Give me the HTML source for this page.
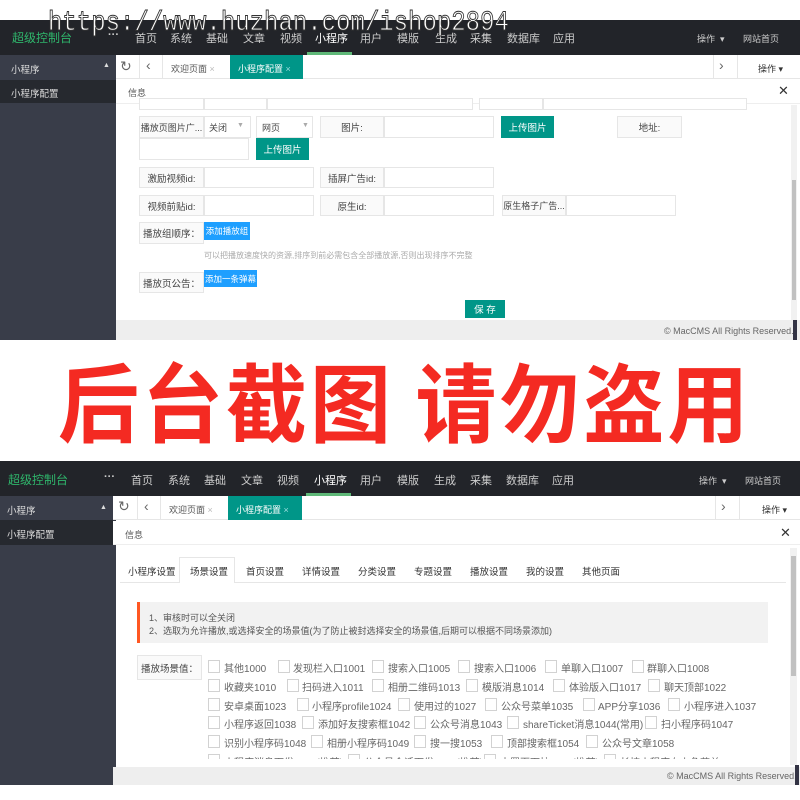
<!DOCTYPE html>
<html><head><meta charset="utf-8"><style>
*{margin:0;padding:0;box-sizing:border-box}
body{width:800px;height:800px;background:#fff;position:relative;overflow:hidden;font-family:"Liberation Sans","Noto Sans CJK SC",sans-serif;font-size:10px;color:#333}
.a{position:absolute;white-space:nowrap}
.hd{background:#222429;left:0;width:800px}
.nav{color:#ccc;font-size:11px}
.sb{background:#393d49;left:0;width:116px}
.lb{position:absolute;border:1px solid #e6e6e6;background:#fafafa;color:#444;font-size:9.5px;display:flex;align-items:center;justify-content:center}
.in{position:absolute;border:1px solid #e6e6e6;background:#fff}
.tb{position:absolute;background:#009688;color:#fff;font-size:9.5px;display:flex;align-items:center;justify-content:center}
.bb{position:absolute;background:#1e9fff;color:#fff;font-size:8.5px;display:flex;align-items:center;justify-content:center}
.cb{position:absolute;width:12px;height:13px;border:1px solid #d2d2d2;background:#fff}
.ct{position:absolute;font-size:10px;color:#666;white-space:nowrap}
.tab{position:absolute;font-size:9.5px;color:#333}
</style></head><body>

<div class="a hd" style="top:20px;height:35px"></div>
<div class="a" style="top:29px;left:12px;color:#2fb56b;font-size:12px">超级控制台</div>
<div class="a nav" style="top:29px;left:108px;font-weight:bold">···</div>
<div class="a nav" style="top:30px;left:135px">首页</div>
<div class="a nav" style="top:30px;left:170px">系统</div>
<div class="a nav" style="top:30px;left:206px">基础</div>
<div class="a nav" style="top:30px;left:243px">文章</div>
<div class="a nav" style="top:30px;left:280px">视频</div>
<div class="a nav" style="top:30px;left:315px;color:#fff">小程序</div>
<div class="a" style="top:52px;left:307px;width:45px;height:3px;background:#5fb878"></div>
<div class="a nav" style="top:30px;left:360px">用户</div>
<div class="a nav" style="top:30px;left:397px">模版</div>
<div class="a nav" style="top:30px;left:435px">生成</div>
<div class="a nav" style="top:30px;left:470px">采集</div>
<div class="a nav" style="top:30px;left:507px">数据库</div>
<div class="a nav" style="top:30px;left:553px">应用</div>
<div class="a nav" style="top:32px;left:697px;font-size:9px">操作 &nbsp;▾</div>
<div class="a nav" style="top:32px;left:743px;font-size:9px">网站首页</div>

<div class="a sb" style="top:55px;height:285px"></div>
<div class="a" style="top:62px;left:11px;color:#ddd;font-size:9.5px">小程序</div>
<div class="a" style="top:62px;left:103px;color:#ddd;font-size:7px">▲</div>
<div class="a" style="top:80px;left:0;width:116px;height:23px;background:#26292f"></div>
<div class="a" style="top:86px;left:11px;color:#ddd;font-size:9.5px">小程序配置</div>

<div class="a" style="top:55px;left:116px;width:684px;height:24px;background:#fff;border-bottom:1px solid #e6e6e6"></div>
<div class="a" style="top:58px;left:120px;font-size:14px;color:#666">↻</div>
<div class="a" style="top:55px;left:139px;width:1px;height:24px;background:#e6e6e6"></div>
<div class="a" style="top:57px;left:146px;font-size:14px;color:#666">‹</div>
<div class="a" style="top:55px;left:162px;width:1px;height:24px;background:#e6e6e6"></div>
<div class="a" style="top:62px;left:171px;font-size:9px;color:#555">欢迎页面 <span style="color:#bbb">×</span></div>
<div class="a" style="top:55px;left:230px;width:73px;height:24px;background:#009688"></div>
<div class="a" style="top:62px;left:238px;font-size:9px;color:#fff">小程序配置 <span style="color:#9dd">×</span></div>
<div class="a" style="top:55px;left:713px;width:1px;height:24px;background:#e6e6e6"></div>
<div class="a" style="top:57px;left:719px;font-size:14px;color:#666">›</div>
<div class="a" style="top:55px;left:737px;width:1px;height:24px;background:#e6e6e6"></div>
<div class="a" style="top:62px;left:758px;font-size:9px;color:#333">操作 ▾</div>

<div class="a" style="top:80px;left:116px;width:684px;height:24px;background:#fff;border-bottom:1px solid #eee"></div>
<div class="a" style="top:86px;left:128px;font-size:9px;color:#555">信息</div>
<div class="a" style="top:83px;left:778px;font-size:13px;color:#333">✕</div>

<div class="in" style="top:98px;left:139px;width:65px;height:12px"></div>
<div class="in" style="top:98px;left:204px;width:63px;height:12px"></div>
<div class="in" style="top:98px;left:267px;width:206px;height:12px"></div>
<div class="in" style="top:98px;left:479px;width:64px;height:12px"></div>
<div class="in" style="top:98px;left:543px;width:204px;height:12px"></div>

<div class="lb" style="top:116px;left:139px;width:65px;height:22px;font-size:9px">播放页图片广...</div>
<div class="in" style="top:116px;left:204px;width:47px;height:22px"></div>
<div class="a" style="top:121px;left:209px;font-size:9px;color:#444">关闭</div>
<div class="a" style="top:122px;left:237px;font-size:7px;color:#aaa">▼</div>
<div class="in" style="top:116px;left:256px;width:57px;height:22px"></div>
<div class="a" style="top:121px;left:262px;font-size:9px;color:#444">网页</div>
<div class="a" style="top:122px;left:302px;font-size:7px;color:#aaa">▼</div>
<div class="lb" style="top:116px;left:320px;width:64px;height:22px">图片:</div>
<div class="in" style="top:116px;left:384px;width:110px;height:22px"></div>
<div class="tb" style="top:116px;left:501px;width:53px;height:22px">上传图片</div>
<div class="lb" style="top:116px;left:617px;width:65px;height:22px">地址:</div>
<div class="in" style="top:138px;left:139px;width:110px;height:22px"></div>
<div class="tb" style="top:138px;left:256px;width:53px;height:22px">上传图片</div>

<div class="lb" style="top:167px;left:139px;width:65px;height:21px">激励视频id:</div>
<div class="in" style="top:167px;left:204px;width:110px;height:21px"></div>
<div class="lb" style="top:167px;left:320px;width:64px;height:21px">插屏广告id:</div>
<div class="in" style="top:167px;left:384px;width:110px;height:21px"></div>

<div class="lb" style="top:195px;left:139px;width:65px;height:21px">视频前贴id:</div>
<div class="in" style="top:195px;left:204px;width:110px;height:21px"></div>
<div class="lb" style="top:195px;left:320px;width:64px;height:21px">原生id:</div>
<div class="in" style="top:195px;left:384px;width:110px;height:21px"></div>
<div class="lb" style="top:195px;left:502px;width:64px;height:21px;font-size:9px">原生格子广告...</div>
<div class="in" style="top:195px;left:566px;width:110px;height:21px"></div>

<div class="lb" style="top:222px;left:139px;width:65px;height:22px">播放组顺序：</div>
<div class="bb" style="top:222px;left:204px;width:46px;height:18px">添加播放组</div>
<div class="a" style="top:250px;left:204px;font-size:8px;color:#aaa">可以把播放速度快的资源,排序到前必需包含全部播放源,否则出现排序不完整</div>
<div class="lb" style="top:272px;left:139px;width:65px;height:21px">播放页公告：</div>
<div class="bb" style="top:270px;left:204px;width:53px;height:17px">添加一条弹幕</div>
<div class="tb" style="top:300px;left:465px;width:40px;height:18px">保 存</div>

<div class="a" style="top:105px;left:791px;width:6px;height:215px;background:#f1f1f1"></div>
<div class="a" style="top:180px;left:792px;width:4px;height:120px;background:#c1c1c1"></div>
<div class="a" style="top:320px;left:116px;width:684px;height:20px;background:#eee"></div>
<div class="a" style="top:326px;left:664px;font-size:9px;color:#666">© MacCMS All Rights Reserved.</div>
<div class="a" style="top:320px;left:793px;width:4px;height:20px;background:#334"></div>

<div class="a" style="top:8px;left:48px;font-family:'Liberation Mono',monospace;font-size:24px;color:#fff;-webkit-text-stroke:0.8px #333;transform:scaleY(1.15);transform-origin:0 0">https://www.huzhan.com/ishop2894</div>

<div class="a" style="top:352px;left:58px;font-size:81px;line-height:90px;font-weight:bold;color:#f42a22;font-family:'Noto Sans CJK SC',sans-serif;letter-spacing:3px;transform:scaleY(1.06);transform-origin:0 0">后台截图 请勿盗用</div>

<div class="a hd" style="top:461px;height:35px"></div>
<div class="a" style="top:471px;left:8px;color:#2fb56b;font-size:12px">超级控制台</div>
<div class="a nav" style="top:471px;left:104px;font-weight:bold">···</div>
<div class="a nav" style="top:472px;left:131px">首页</div>
<div class="a nav" style="top:472px;left:168px">系统</div>
<div class="a nav" style="top:472px;left:204px">基础</div>
<div class="a nav" style="top:472px;left:241px">文章</div>
<div class="a nav" style="top:472px;left:277px">视频</div>
<div class="a nav" style="top:472px;left:314px;color:#fff">小程序</div>
<div class="a" style="top:493px;left:306px;width:45px;height:3px;background:#5fb878"></div>
<div class="a nav" style="top:472px;left:360px">用户</div>
<div class="a nav" style="top:472px;left:397px">模版</div>
<div class="a nav" style="top:472px;left:434px">生成</div>
<div class="a nav" style="top:472px;left:470px">采集</div>
<div class="a nav" style="top:472px;left:506px">数据库</div>
<div class="a nav" style="top:472px;left:552px">应用</div>
<div class="a nav" style="top:474px;left:699px;font-size:9px">操作 &nbsp;▾</div>
<div class="a nav" style="top:474px;left:745px;font-size:9px">网站首页</div>

<div class="a sb" style="top:496px;height:289px"></div>
<div class="a" style="top:503px;left:7px;color:#ddd;font-size:9.5px">小程序</div>
<div class="a" style="top:504px;left:100px;color:#ddd;font-size:7px">▲</div>
<div class="a" style="top:520px;left:0;width:113px;height:25px;background:#26292f"></div>
<div class="a" style="top:527px;left:7px;color:#ddd;font-size:9.5px">小程序配置</div>

<div class="a" style="top:496px;left:113px;width:687px;height:24px;background:#fff;border-bottom:1px solid #e6e6e6"></div>
<div class="a" style="top:498px;left:118px;font-size:14px;color:#666">↻</div>
<div class="a" style="top:496px;left:137px;width:1px;height:24px;background:#e6e6e6"></div>
<div class="a" style="top:498px;left:144px;font-size:14px;color:#666">‹</div>
<div class="a" style="top:496px;left:160px;width:1px;height:24px;background:#e6e6e6"></div>
<div class="a" style="top:503px;left:169px;font-size:9px;color:#555">欢迎页面 <span style="color:#bbb">×</span></div>
<div class="a" style="top:496px;left:228px;width:74px;height:24px;background:#009688"></div>
<div class="a" style="top:503px;left:236px;font-size:9px;color:#fff">小程序配置 <span style="color:#9dd">×</span></div>
<div class="a" style="top:496px;left:715px;width:1px;height:24px;background:#e6e6e6"></div>
<div class="a" style="top:498px;left:721px;font-size:14px;color:#666">›</div>
<div class="a" style="top:496px;left:739px;width:1px;height:24px;background:#e6e6e6"></div>
<div class="a" style="top:503px;left:762px;font-size:9px;color:#333">操作 ▾</div>

<div class="a" style="top:521px;left:113px;width:687px;height:24px;background:#fff;border-bottom:1px solid #eee"></div>
<div class="a" style="top:528px;left:125px;font-size:9px;color:#555">信息</div>
<div class="a" style="top:525px;left:780px;font-size:13px;color:#333">✕</div>

<div class="a" style="top:582px;left:120px;width:666px;height:1px;background:#e6e6e6"></div>
<div class="a" style="top:557px;left:179px;width:56px;height:26px;background:#fff;border:1px solid #e6e6e6;border-bottom:none"></div>
<div class="tab" style="top:564px;left:128px">小程序设置</div>
<div class="tab" style="top:564px;left:190px">场景设置</div>
<div class="tab" style="top:564px;left:246px">首页设置</div>
<div class="tab" style="top:564px;left:302px">详情设置</div>
<div class="tab" style="top:564px;left:358px">分类设置</div>
<div class="tab" style="top:564px;left:414px">专题设置</div>
<div class="tab" style="top:564px;left:470px">播放设置</div>
<div class="tab" style="top:564px;left:526px">我的设置</div>
<div class="tab" style="top:564px;left:582px">其他页面</div>

<div class="a" style="top:602px;left:137px;width:631px;height:41px;background:#f2f2f2;border-left:3px solid #ff5722"></div>
<div class="a" style="top:611px;left:149px;font-size:9px;color:#555">1、审核时可以全关闭</div>
<div class="a" style="top:624px;left:149px;font-size:9px;color:#555">2、选取为允许播放,或选择安全的场景值(为了防止被封选择安全的场景值,后期可以根据不同场景添加)</div>

<div class="lb" style="top:655px;left:137px;width:65px;height:25px">播放场景值：</div>
<div class="a" style="top:658px;left:200px;width:590px;height:101px;overflow:hidden">
<div style="position:relative">
<div class="cb" style="top:2px;left:8px"></div><div class="ct" style="top:2px;left:24px">其他1000</div>
<div class="cb" style="top:2px;left:78px"></div><div class="ct" style="top:2px;left:93px">发现栏入口1001</div>
<div class="cb" style="top:2px;left:172px"></div><div class="ct" style="top:2px;left:188px">搜索入口1005</div>
<div class="cb" style="top:2px;left:258px"></div><div class="ct" style="top:2px;left:274px">搜索入口1006</div>
<div class="cb" style="top:2px;left:345px"></div><div class="ct" style="top:2px;left:361px">单聊入口1007</div>
<div class="cb" style="top:2px;left:432px"></div><div class="ct" style="top:2px;left:447px">群聊入口1008</div>

<div class="cb" style="top:21px;left:8px"></div><div class="ct" style="top:21px;left:24px">收藏夹1010</div>
<div class="cb" style="top:21px;left:87px"></div><div class="ct" style="top:21px;left:102px">扫码进入1011</div>
<div class="cb" style="top:21px;left:172px"></div><div class="ct" style="top:21px;left:188px">相册二维码1013</div>
<div class="cb" style="top:21px;left:266px"></div><div class="ct" style="top:21px;left:282px">模版消息1014</div>
<div class="cb" style="top:21px;left:353px"></div><div class="ct" style="top:21px;left:369px">体验版入口1017</div>
<div class="cb" style="top:21px;left:448px"></div><div class="ct" style="top:21px;left:464px">聊天顶部1022</div>

<div class="cb" style="top:40px;left:8px"></div><div class="ct" style="top:40px;left:24px">安卓桌面1023</div>
<div class="cb" style="top:40px;left:97px"></div><div class="ct" style="top:40px;left:112px">小程序profile1024</div>
<div class="cb" style="top:40px;left:198px"></div><div class="ct" style="top:40px;left:214px">使用过的1027</div>
<div class="cb" style="top:40px;left:285px"></div><div class="ct" style="top:40px;left:301px">公众号菜单1035</div>
<div class="cb" style="top:40px;left:383px"></div><div class="ct" style="top:40px;left:398px">APP分享1036</div>
<div class="cb" style="top:40px;left:468px"></div><div class="ct" style="top:40px;left:484px">小程序进入1037</div>

<div class="cb" style="top:58px;left:8px"></div><div class="ct" style="top:58px;left:24px">小程序返回1038</div>
<div class="cb" style="top:58px;left:102px"></div><div class="ct" style="top:58px;left:118px">添加好友搜索框1042</div>
<div class="cb" style="top:58px;left:214px"></div><div class="ct" style="top:58px;left:230px">公众号消息1043</div>
<div class="cb" style="top:58px;left:307px"></div><div class="ct" style="top:58px;left:323px">shareTicket消息1044(常用)</div>
<div class="cb" style="top:58px;left:445px"></div><div class="ct" style="top:58px;left:461px">扫小程序码1047</div>

<div class="cb" style="top:77px;left:8px"></div><div class="ct" style="top:77px;left:24px">识别小程序码1048</div>
<div class="cb" style="top:77px;left:111px"></div><div class="ct" style="top:77px;left:127px">相册小程序码1049</div>
<div class="cb" style="top:77px;left:214px"></div><div class="ct" style="top:77px;left:230px">搜一搜1053</div>
<div class="cb" style="top:77px;left:291px"></div><div class="ct" style="top:77px;left:307px">顶部搜索框1054</div>
<div class="cb" style="top:77px;left:386px"></div><div class="ct" style="top:77px;left:402px">公众号文章1058</div>

<div class="cb" style="top:96px;left:8px"></div><div class="ct" style="top:96px;left:24px">小程序消息下发1073(推荐)</div>
<div class="cb" style="top:96px;left:148px"></div><div class="ct" style="top:96px;left:164px">公众号会话下发1074(推荐)</div>
<div class="cb" style="top:96px;left:284px"></div><div class="ct" style="top:96px;left:300px">内置页下拉1089(推荐)</div>
<div class="cb" style="top:96px;left:404px"></div><div class="ct" style="top:96px;left:420px">长按小程序右上角菜单1090</div>
</div></div>

<div class="a" style="top:548px;left:790px;width:7px;height:217px;background:#f1f1f1"></div>
<div class="a" style="top:556px;left:791px;width:5px;height:120px;background:#c1c1c1"></div>
<div class="a" style="top:767px;left:113px;width:687px;height:18px;background:#eee"></div>
<div class="a" style="top:771px;left:667px;font-size:9px;color:#666">© MacCMS All Rights Reserved.</div>
<div class="a" style="top:765px;left:795px;width:4px;height:20px;background:#334"></div>
</body></html>
